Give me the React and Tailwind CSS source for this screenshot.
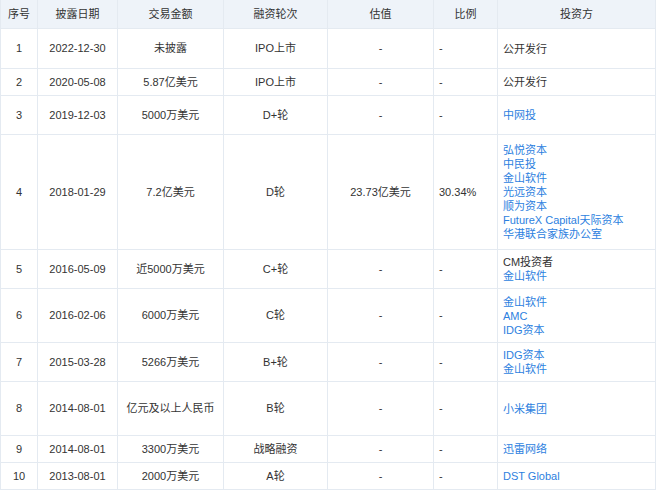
export default function App() {
  const rows = [
    ["1","2022-12-30","未披露","IPO上市","-","-",[["公开发行",0]],40],
    ["2","2020-05-08","5.87亿美元","IPO上市","-","-",[["公开发行",0]],27],
    ["3","2019-12-03","5000万美元","D+轮","-","-",[["中网投",1]],39],
    ["4","2018-01-29","7.2亿美元","D轮","23.73亿美元","30.34%",[["弘悦资本",1],["中民投",1],["金山软件",1],["光远资本",1],["顺为资本",1],["FutureX Capital天际资本",1],["华港联合家族办公室",1]],115],
    ["5","2016-05-09","近5000万美元","C+轮","-","-",[["CM投资者",0],["金山软件",1]],39],
    ["6","2016-02-06","6000万美元","C轮","-","-",[["金山软件",1],["AMC",1],["IDG资本",1]],54],
    ["7","2015-03-28","5266万美元","B+轮","-","-",[["IDG资本",1],["金山软件",1]],39],
    ["8","2014-08-01","亿元及以上人民币","B轮","-","-",[["小米集团",1]],54],
    ["9","2014-08-01","3300万美元","战略融资","-","-",[["迅雷网络",1]],27],
    ["10","2013-08-01","2000万美元","A轮","-","-",[["DST Global",1]],27],
  ];
  const cols = "grid grid-cols-[37px_80px_106px_104px_106px_64px_158px]";
  const c = "border-r border-b border-[#e4eaf1] flex items-center";
  return (
    <div className="w-[660px] h-[490px] bg-white overflow-hidden text-[11px] text-[#333]" style={{fontFamily:'"Liberation Sans","Noto Sans CJK SC",sans-serif'}}>
      <div className="w-[656px] border-l border-[#e4eaf1]">
        <div className={`${cols} h-[29px] bg-[#eef3f9]`}>
          {["序号","披露日期","交易金额","融资轮次","估值","比例","投资方"].map(h=>(
            <div key={h} className={`${c} justify-center border-[#dfe6ee]`}>{h}</div>
          ))}
        </div>
        {rows.map(r=>(
          <div key={r[0]} className={cols} style={{height:r[7]}}>
            <div className={`${c} justify-center`}>{r[0]}</div>
            <div className={`${c} justify-center`}>{r[1]}</div>
            <div className={`${c} justify-center`}>{r[2]}</div>
            <div className={`${c} justify-center`}>{r[3]}</div>
            <div className={`${c} justify-center`}>{r[4]}</div>
            <div className={`${c} pl-[5px]`}>{r[5]}</div>
            <div className={`${c} pl-[5px]`}>
              <div className="flex flex-col leading-[14px]">
                {r[6].map(([t,l])=><span key={t} className={l?"text-[#2d7fe0]":""}>{t}</span>)}
              </div>
            </div>
          </div>
        ))}
      </div>
    </div>
  );
}
